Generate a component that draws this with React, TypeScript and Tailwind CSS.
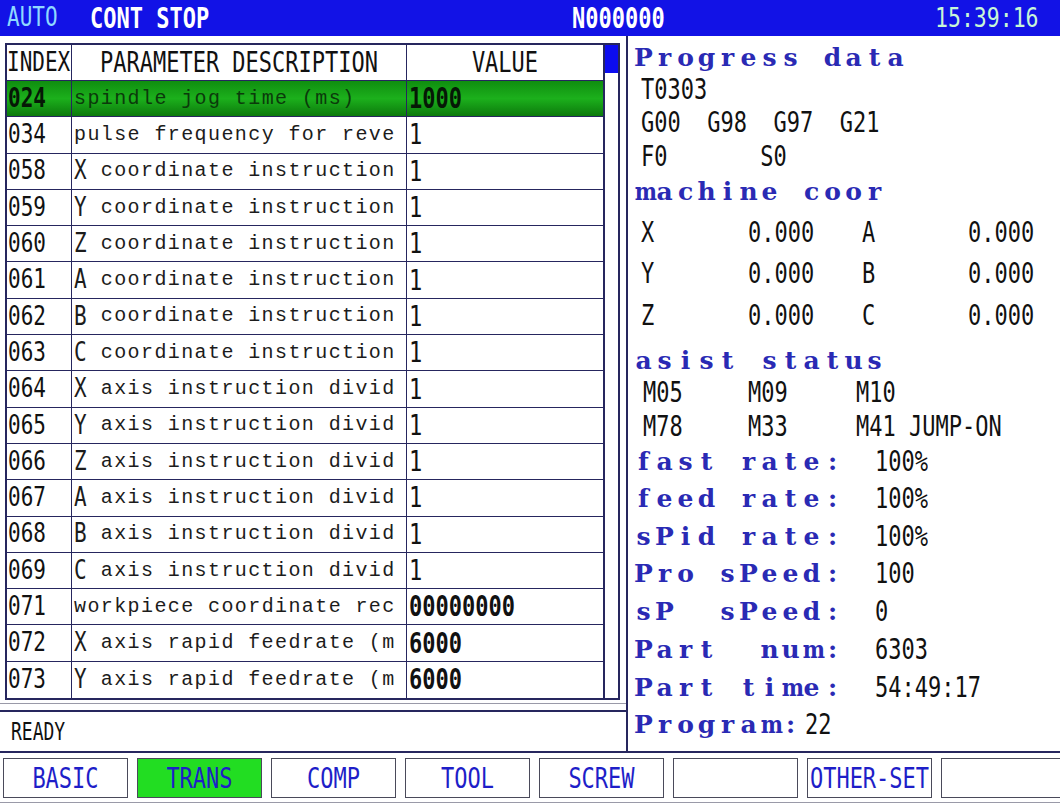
import React from "react";

const rows: [string, string, string][] = [
  ["024", "spindle jog time (ms)", "1000"],
  ["034", "pulse frequency for reve", "1"],
  ["058", "X coordinate instruction", "1"],
  ["059", "Y coordinate instruction", "1"],
  ["060", "Z coordinate instruction", "1"],
  ["061", "A coordinate instruction", "1"],
  ["062", "B coordinate instruction", "1"],
  ["063", "C coordinate instruction", "1"],
  ["064", "X axis instruction divid", "1"],
  ["065", "Y axis instruction divid", "1"],
  ["066", "Z axis instruction divid", "1"],
  ["067", "A axis instruction divid", "1"],
  ["068", "B axis instruction divid", "1"],
  ["069", "C axis instruction divid", "1"],
  ["071", "workpiece coordinate rec", "00000000"],
  ["072", "X axis rapid feedrate (m", "6000"],
  ["073", "Y axis rapid feedrate (m", "6000"],
];

function T({ children, className = "" }: { children: React.ReactNode; className?: string }) {
  return (
    <span className={`inline-block scale-y-125 whitespace-pre font-['DejaVu_Sans_Mono',monospace] ${className}`}>
      {children}
    </span>
  );
}

function Lbl({ text }: { text: string }) {
  return (
    <span className="inline-flex font-['DejaVu_Serif',serif] font-bold text-[25px] leading-none text-[#2a2ab4]">
      {text.split("").map((c, i) => (
        <span
          key={i}
          className={`inline-block w-[21px] text-center whitespace-pre ${c === "m" ? "scale-x-[0.84]" : ""}`}
        >
          {c}
        </span>
      ))}
    </span>
  );
}

function Row({ children, className = "" }: { children: React.ReactNode; className?: string }) {
  return <div className={`h-[32px] flex items-center ${className}`}>{children}</div>;
}

function RateRow({ label, value, className = "" }: { label: string; value: string; className?: string }) {
  return (
    <Row className={className}>
      <div className="w-[242px] flex">
        <Lbl text={label} />
      </div>
      <T className="text-[22px] text-[#111]">{value}</T>
    </Row>
  );
}

function Desc({ text, sel }: { text: string; sel: boolean }) {
  const color = sel ? "text-[#0b3a0b]" : "text-[#1c1c1c]";
  const m = /^([A-Z])( .*)$/.exec(text);
  const cls = `whitespace-pre font-['Liberation_Mono',monospace] text-[20px] tracking-[1.4px] ${color}`;
  if (m) {
    return (
      <span className="flex items-center">
        <T className={`text-[21px] w-[13.4px] ${color}`}>{m[1]}</T>
        <span className={cls}>{m[2]}</span>
      </span>
    );
  }
  return <span className={cls}>{text}</span>;
}

const buttons = ["BASIC", "TRANS", "COMP", "TOOL", "SCREW", "", "OTHER-SET", ""];

export default function App() {
  return (
    <div className="w-[1060px] h-[806px] bg-white flex flex-col overflow-hidden">
      {/* Top bar */}
      <div className="h-[36px] shrink-0 bg-[#1212e6] flex items-center">
        <div className="w-[90px] pl-[7px]">
          <T className="text-[21px] text-[#8fd8ff]">AUTO</T>
        </div>
        <div className="w-[482px]">
          <T className="text-[22px] font-bold text-white">CONT STOP</T>
        </div>
        <div className="w-[363px]">
          <T className="text-[22px] font-bold text-white">N000000</T>
        </div>
        <div>
          <T className="text-[21.5px] text-[#c8f7d6]">15:39:16</T>
        </div>
      </div>

      {/* Main */}
      <div className="flex h-[715px] shrink-0">
        {/* Left column */}
        <div className="w-[628px] border-r-2 border-[#26265e] flex flex-col">
          <div className="flex mt-[7px] ml-[5px]">
            <div className="w-[600px] h-[657px] border-2 border-[#26265e] flex flex-col">
              <div className="grid grid-cols-[65px_335px_1fr] h-[36px] border-b-[1.5px] border-[#26265e] text-[#111]">
                <div className="border-r-[1.5px] border-[#26265e] flex items-center">
                  <T className="text-[21px]">INDEX</T>
                </div>
                <div className="border-r-[1.5px] border-[#26265e] flex items-center justify-center">
                  <T className="text-[22px]">PARAMETER DESCRIPTION</T>
                </div>
                <div className="flex items-center justify-center">
                  <T className="text-[22px]">VALUE</T>
                </div>
              </div>
              {rows.map(([idx, desc, val], i) => {
                const sel = i === 0;
                const bold = val.length > 1;
                return (
                  <div
                    key={idx}
                    className={`grid grid-cols-[65px_335px_1fr] h-[36.3px] ${
                      i < rows.length - 1 ? "border-b-[1.5px]" : ""
                    } border-[#26265e] ${sel ? "bg-linear-to-b from-[#0f8e0f] via-[#1cb01c] to-[#0c7a0c]" : ""}`}
                  >
                    <div className="border-r-[1.5px] border-[#26265e] flex items-center pl-[1px]">
                      <T className={`text-[21px] ${sel ? "text-[#061806] font-bold" : "text-[#111]"}`}>{idx}</T>
                    </div>
                    <div className="border-r-[1.5px] border-[#26265e] flex items-center pl-[2px]">
                      <Desc text={desc} sel={sel} />
                    </div>
                    <div className="flex items-center pl-[2px]">
                      <T className={`text-[22px] ${bold ? "font-bold" : ""} ${sel ? "text-[#061806]" : "text-[#111]"}`}>
                        {val}
                      </T>
                    </div>
                  </div>
                );
              })}
            </div>
            <div className="w-[15px] h-[657px] border-y-2 border-r-2 border-[#26265e] flex flex-col">
              <div className="h-[28px] bg-[#0c0cf0]" />
            </div>
          </div>
          <div className="mt-[3px] h-px bg-[#9a9aa8]" />
          <div className="mt-[6px] h-[2px] bg-[#26265e]" />
          <div className="flex-1 flex items-center pl-[11px]">
            <T className="text-[18px] text-[#111] scale-y-[1.38]">READY</T>
          </div>
        </div>

        {/* Right panel */}
        <div className="flex-1 pl-[5px] pt-[5px] flex flex-col text-[#111]">
          <Row>
            <Lbl text="Progress data" />
          </Row>
          <Row className="pl-[8px]">
            <T className="text-[22px]">T0303</T>
          </Row>
          <Row className="mt-[1px] pl-[8px]">
            <T className="text-[22px]">G00  G98  G97  G21</T>
          </Row>
          <Row className="mt-[2px] pl-[8px]">
            <T className="text-[22px]">F0       S0</T>
          </Row>
          <Row className="mt-[3px]">
            <Lbl text="machine coor" />
          </Row>
          {[
            ["X", "A"],
            ["Y", "B"],
            ["Z", "C"],
          ].map(([a, b], i) => (
            <Row key={a} className={`${i === 2 ? "mt-[10px]" : "mt-[9px]"} pl-[8px]`}>
              <div className="grid grid-cols-[107px_114px_106px_auto] text-[22px]">
                <T>{a}</T>
                <T>0.000</T>
                <T>{b}</T>
                <T>0.000</T>
              </div>
            </Row>
          ))}
          <Row className="mt-[13px]">
            <Lbl text="asist status" />
          </Row>
          <Row className="pl-[10px]">
            <div className="grid grid-cols-[105px_108px_auto] text-[22px]">
              <T>M05</T>
              <T>M09</T>
              <T>M10</T>
            </div>
          </Row>
          <Row className="mt-[2px] pl-[10px]">
            <div className="grid grid-cols-[105px_108px_auto] text-[22px]">
              <T>M78</T>
              <T>M33</T>
              <T>M41 JUMP-ON</T>
            </div>
          </Row>
          <RateRow className="mt-[3px]" label="fast rate:" value="100%" />
          <RateRow className="mt-[5px]" label="feed rate:" value="100%" />
          <RateRow className="mt-[6px]" label="sPid rate:" value="100%" />
          <RateRow className="mt-[5px]" label="Pro sPeed:" value="100" />
          <RateRow className="mt-[6px]" label="sP  sPeed:" value="0" />
          <RateRow className="mt-[6px]" label="Part  num:" value="6303" />
          <RateRow className="mt-[6px]" label="Part time:" value="54:49:17" />
          <Row className="mt-[5px]">
            <Lbl text="Program:" />
            <T className="text-[22px] ml-[4px]">22</T>
          </Row>
        </div>
      </div>

      {/* Bottom buttons */}
      <div className="flex-1 border-t-2 border-[#26265e] flex flex-col">
        <div className="mt-[5px] flex gap-[9px] pl-[3px]">
          {buttons.map((b, i) => (
            <div
              key={i}
              className={`w-[125px] h-[40px] shrink-0 border-[1.5px] border-[#4a4a5a] flex items-center justify-center ${
                b === "TRANS" ? "bg-[#22dd22]" : "bg-white"
              }`}
            >
              <T className="text-[22px] text-[#1e1ec8]">{b}</T>
            </div>
          ))}
        </div>
        <div className="mt-[4px] h-px bg-[#9a9aa8]" />
      </div>
    </div>
  );
}
